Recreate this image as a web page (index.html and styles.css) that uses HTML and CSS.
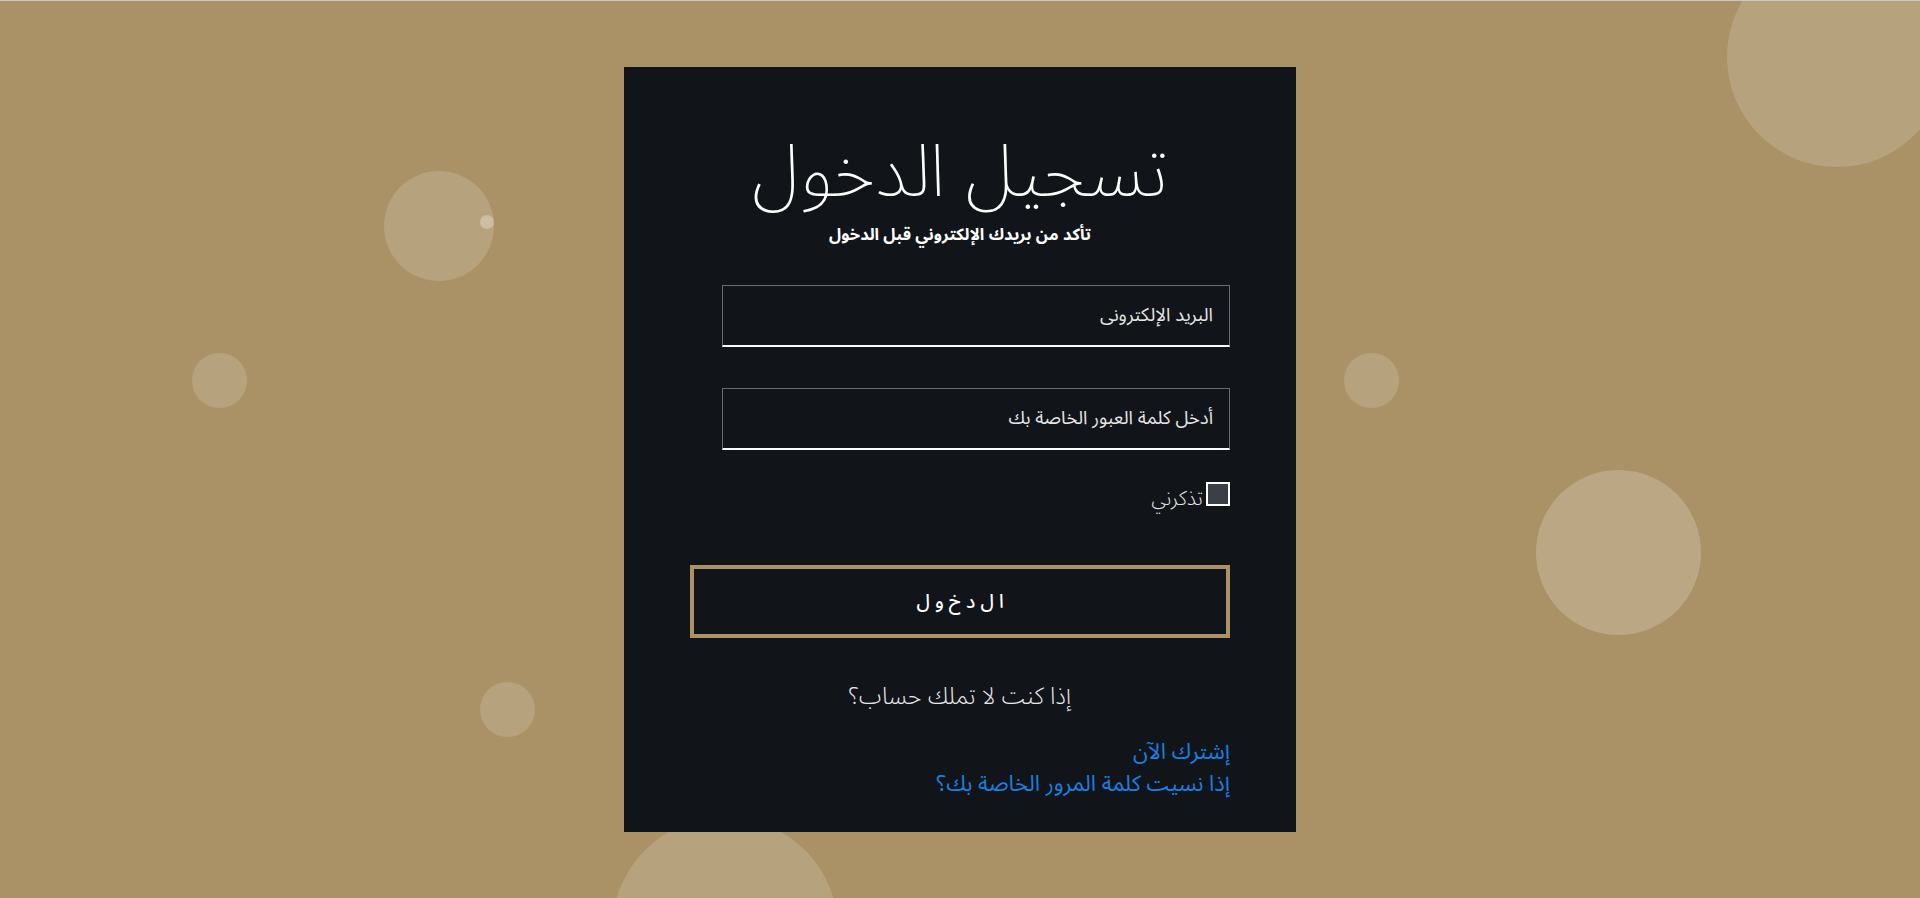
FILE: index.html
```html
<!DOCTYPE html>
<html lang="ar" dir="rtl">
<head>
<meta charset="utf-8">
<title>تسجيل الدخول</title>
<link rel="stylesheet" href="styles.css">
</head>
<body>
<div class="bubbles" aria-hidden="true">
  <span class="bubble b1"></span>
  <span class="bubble b2"></span>
  <span class="bubble b3"></span>
  <span class="bubble b4"></span>
  <span class="bubble b5"></span>
  <span class="bubble b6"></span>
  <span class="bubble b7"></span>
  <span class="bubble b8"></span>
</div>
<main class="card">
  <h1 class="title">تسجيل الدخول</h1>
  <p class="subtitle">تأكد من بريدك الإلكتروني قبل الدخول</p>
  <form class="form">
    <input class="field" type="email" placeholder="البريد الإلكترونى">
    <input class="field" type="password" placeholder="أدخل كلمة العبور الخاصة بك">
    <label class="remember"><span class="box"></span><span class="remember-text">تذكرني</span></label>
    <button class="submit" type="button" aria-label="الدخول"><span class="ch">ا</span><span class="ch">ل</span><span class="ch">د</span><span class="ch">خ</span><span class="ch">و</span><span class="ch">ل</span></button>
  </form>
  <p class="noacc">إذا كنت لا تملك حساب؟</p>
  <div class="links">
    <a href="#">إشترك الآن</a>
    <a href="#">إذا نسيت كلمة المرور الخاصة بك؟</a>
  </div>
</main>
</body>
</html>
```
FILE: styles.css
```css
* { box-sizing: border-box; }
html, body { margin: 0; padding: 0; overflow: hidden; }
body {
  height: 898px;
  background: #aa9266;
  border-top: 1px solid #c6c8cb;
  font-family: "Noto Sans Arabic", "Noto Sans", "DejaVu Sans", sans-serif;
  position: relative;
}
.bubbles { position: absolute; inset: 0; overflow: hidden; }
.bubble {
  position: absolute;
  border-radius: 50%;
  background: rgba(255,255,255,0.15);
}
.b1 { left: 384px; top: 170px; width: 110px; height: 110px; }
.b2 { left: 480px; top: 214px; width: 14px; height: 14px; background: rgba(255,255,255,0.3); }
.b3 { left: 192px; top: 352px; width: 55px; height: 55px; }
.b4 { left: 1344px; top: 352px; width: 55px; height: 55px; }
.b5 { left: 1536px; top: 469px; width: 165px; height: 165px; background: rgba(255,255,255,0.2); }
.b6 { left: 480px; top: 681px; width: 55px; height: 55px; }
.b7 { left: 1727px; top: -54px; width: 220px; height: 220px; }
.b8 { left: 612px; top: 816px; width: 226px; height: 226px; }

.card {
  position: relative;
  width: 672px;
  height: 765px;
  margin: 66px auto 0;
  background: #111418;
  padding: 0 66px;
  color: #fff;
}
.title {
  margin: 0;
  padding-top: 56px;
  text-align: center;
  font-size: 73px;
  font-weight: 200;
  line-height: 100px;
}
.subtitle {
  margin: 0;
  text-align: center;
  font-size: 16.5px;
  font-weight: 700;
  line-height: 24px;
}
.form {
  display: flex;
  flex-direction: column;
  align-items: flex-start;
  margin-top: 38px;
}
.field {
  width: 508px;
  height: 62px;
  background: transparent;
  border: 1px solid #6a6c6f;
  border-bottom: 2px solid #fff;
  padding: 0 16px;
  color: #fff;
  font-family: inherit;
  font-size: 18.5px;
  font-weight: 400;
  margin-bottom: 41px;
}
.field::placeholder { color: #e4e4e4; }
.remember {
  display: flex;
  align-items: center;
  gap: 3px;
  color: #e2e2e2;
  font-size: 20px;
  font-weight: 300;
  margin-top: -12px;
  height: 30px;
}
.remember-text {
  line-height: 24px;
  padding-top: 10px;
}
.box {
  width: 24px;
  height: 24px;
  background: #3a3f48;
  border: 2px solid #fff;
}
.submit {
  width: 540px;
  height: 73px;
  margin-top: 56px;
  background: transparent;
  border: 4px solid #aa9266;
  color: #fff;
  font-family: inherit;
  font-size: 19px;
  font-weight: 500;
  display: flex;
  justify-content: center;
  align-items: center;
  gap: 5px;
  padding: 0;
}
.ch { display: inline-block; }
.noacc {
  margin: 42px 0 0;
  text-align: center;
  font-size: 23.5px;
  font-weight: 300;
  color: #e6e6e6;
  line-height: 34px;
}
.links {
  display: flex;
  flex-direction: column;
  align-items: flex-start;
  margin-top: 22px;
}
.links a {
  color: #1a7fe0;
  text-decoration: none;
  font-size: 22px;
  font-weight: 400;
  line-height: 32px;
}
```
